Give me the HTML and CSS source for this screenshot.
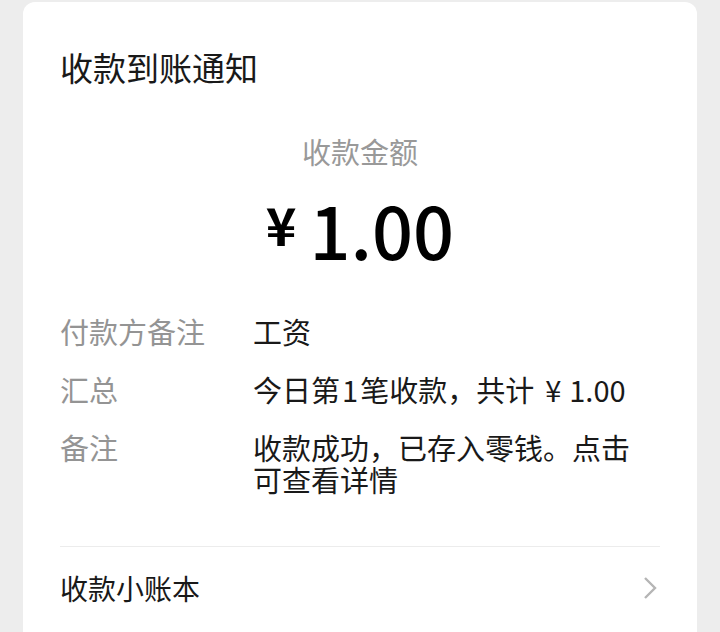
FILE: index.html
```html
<!DOCTYPE html>
<html lang="zh-CN">
<head>
    <meta charset="UTF-8">
    <meta name="viewport" content="width=device-width, initial-scale=1.0">
    <title>收款到账通知</title>
    <link rel="stylesheet" href="styles.css">
</head>
<body>
    <div class="card">
        <h1 class="card-title">收款到账通知</h1>
        <div class="amount-block">
            <div class="amount-label">收款金额</div>
            <div class="amount"><span class="currency">¥</span>1.00</div>
        </div>
        <div class="details">
            <div class="detail-row">
                <div class="detail-label">付款方备注</div>
                <div class="detail-value">工资</div>
            </div>
            <div class="detail-row">
                <div class="detail-label">汇总</div>
                <div class="detail-value">今日第<span class="num">1</span>笔收款，共计<span class="yen">¥</span>1.00</div>
            </div>
            <div class="detail-row">
                <div class="detail-label">备注</div>
                <div class="detail-value">收款成功，已存入零钱。点击可查看详情</div>
            </div>
        </div>
        <div class="footer-link">
            <span>收款小账本</span>
            <svg class="chevron" width="14" height="24" viewBox="0 0 14 24">
                <path d="M2 2 L12 12 L2 22" fill="none" stroke="#b5b5b5" stroke-width="2.4"/>
            </svg>
        </div>
    </div>
</body>
</html>
```

FILE: styles.css
```css
body {
    margin: 0;
    background-color: #ededed;
    font-family: "Noto Sans CJK SC", "Noto Sans", sans-serif;
    color: #191919;
}
.card {
    margin: 2px 23px 0;
    height: 660px;
    padding: 0 37px;
    background-color: white;
    border-radius: 12px;
}
.card-title {
    margin: 0;
    padding-top: 45px;
    font-size: 33px;
    font-weight: normal;
    line-height: 40px;
    color: #191919;
}
.amount-block {
    text-align: center;
    margin-top: 46px;
}
.amount-label {
    font-size: 29px;
    line-height: 36px;
    color: #999;
}
.amount {
    margin-top: 15px;
    font-size: 72px;
    line-height: 80px;
    font-weight: 500;
    color: #000;
}
.currency {
    font-size: 52px;
    font-weight: bold;
    margin-right: 13px;
    vertical-align: 14px;
}
.details {
    display: flex;
    flex-direction: column;
    gap: 26px;
    margin-top: 46px;
}
.detail-row {
    display: flex;
}
.detail-label {
    width: 193px;
    flex-shrink: 0;
    font-size: 29px;
    line-height: 32px;
    color: #949494;
}
.detail-value {
    width: 385px;
    font-size: 29px;
    line-height: 32px;
    color: #191919;
}
.num {
    margin: 0 2px;
}
.yen {
    margin: 0 8px 0 11px;
}
.footer-link {
    display: flex;
    justify-content: space-between;
    align-items: center;
    margin-top: 51px;
    border-top: 1px solid #ececec;
    padding: 24px 3px 0 0;
    font-size: 28px;
    line-height: 34px;
}
```
